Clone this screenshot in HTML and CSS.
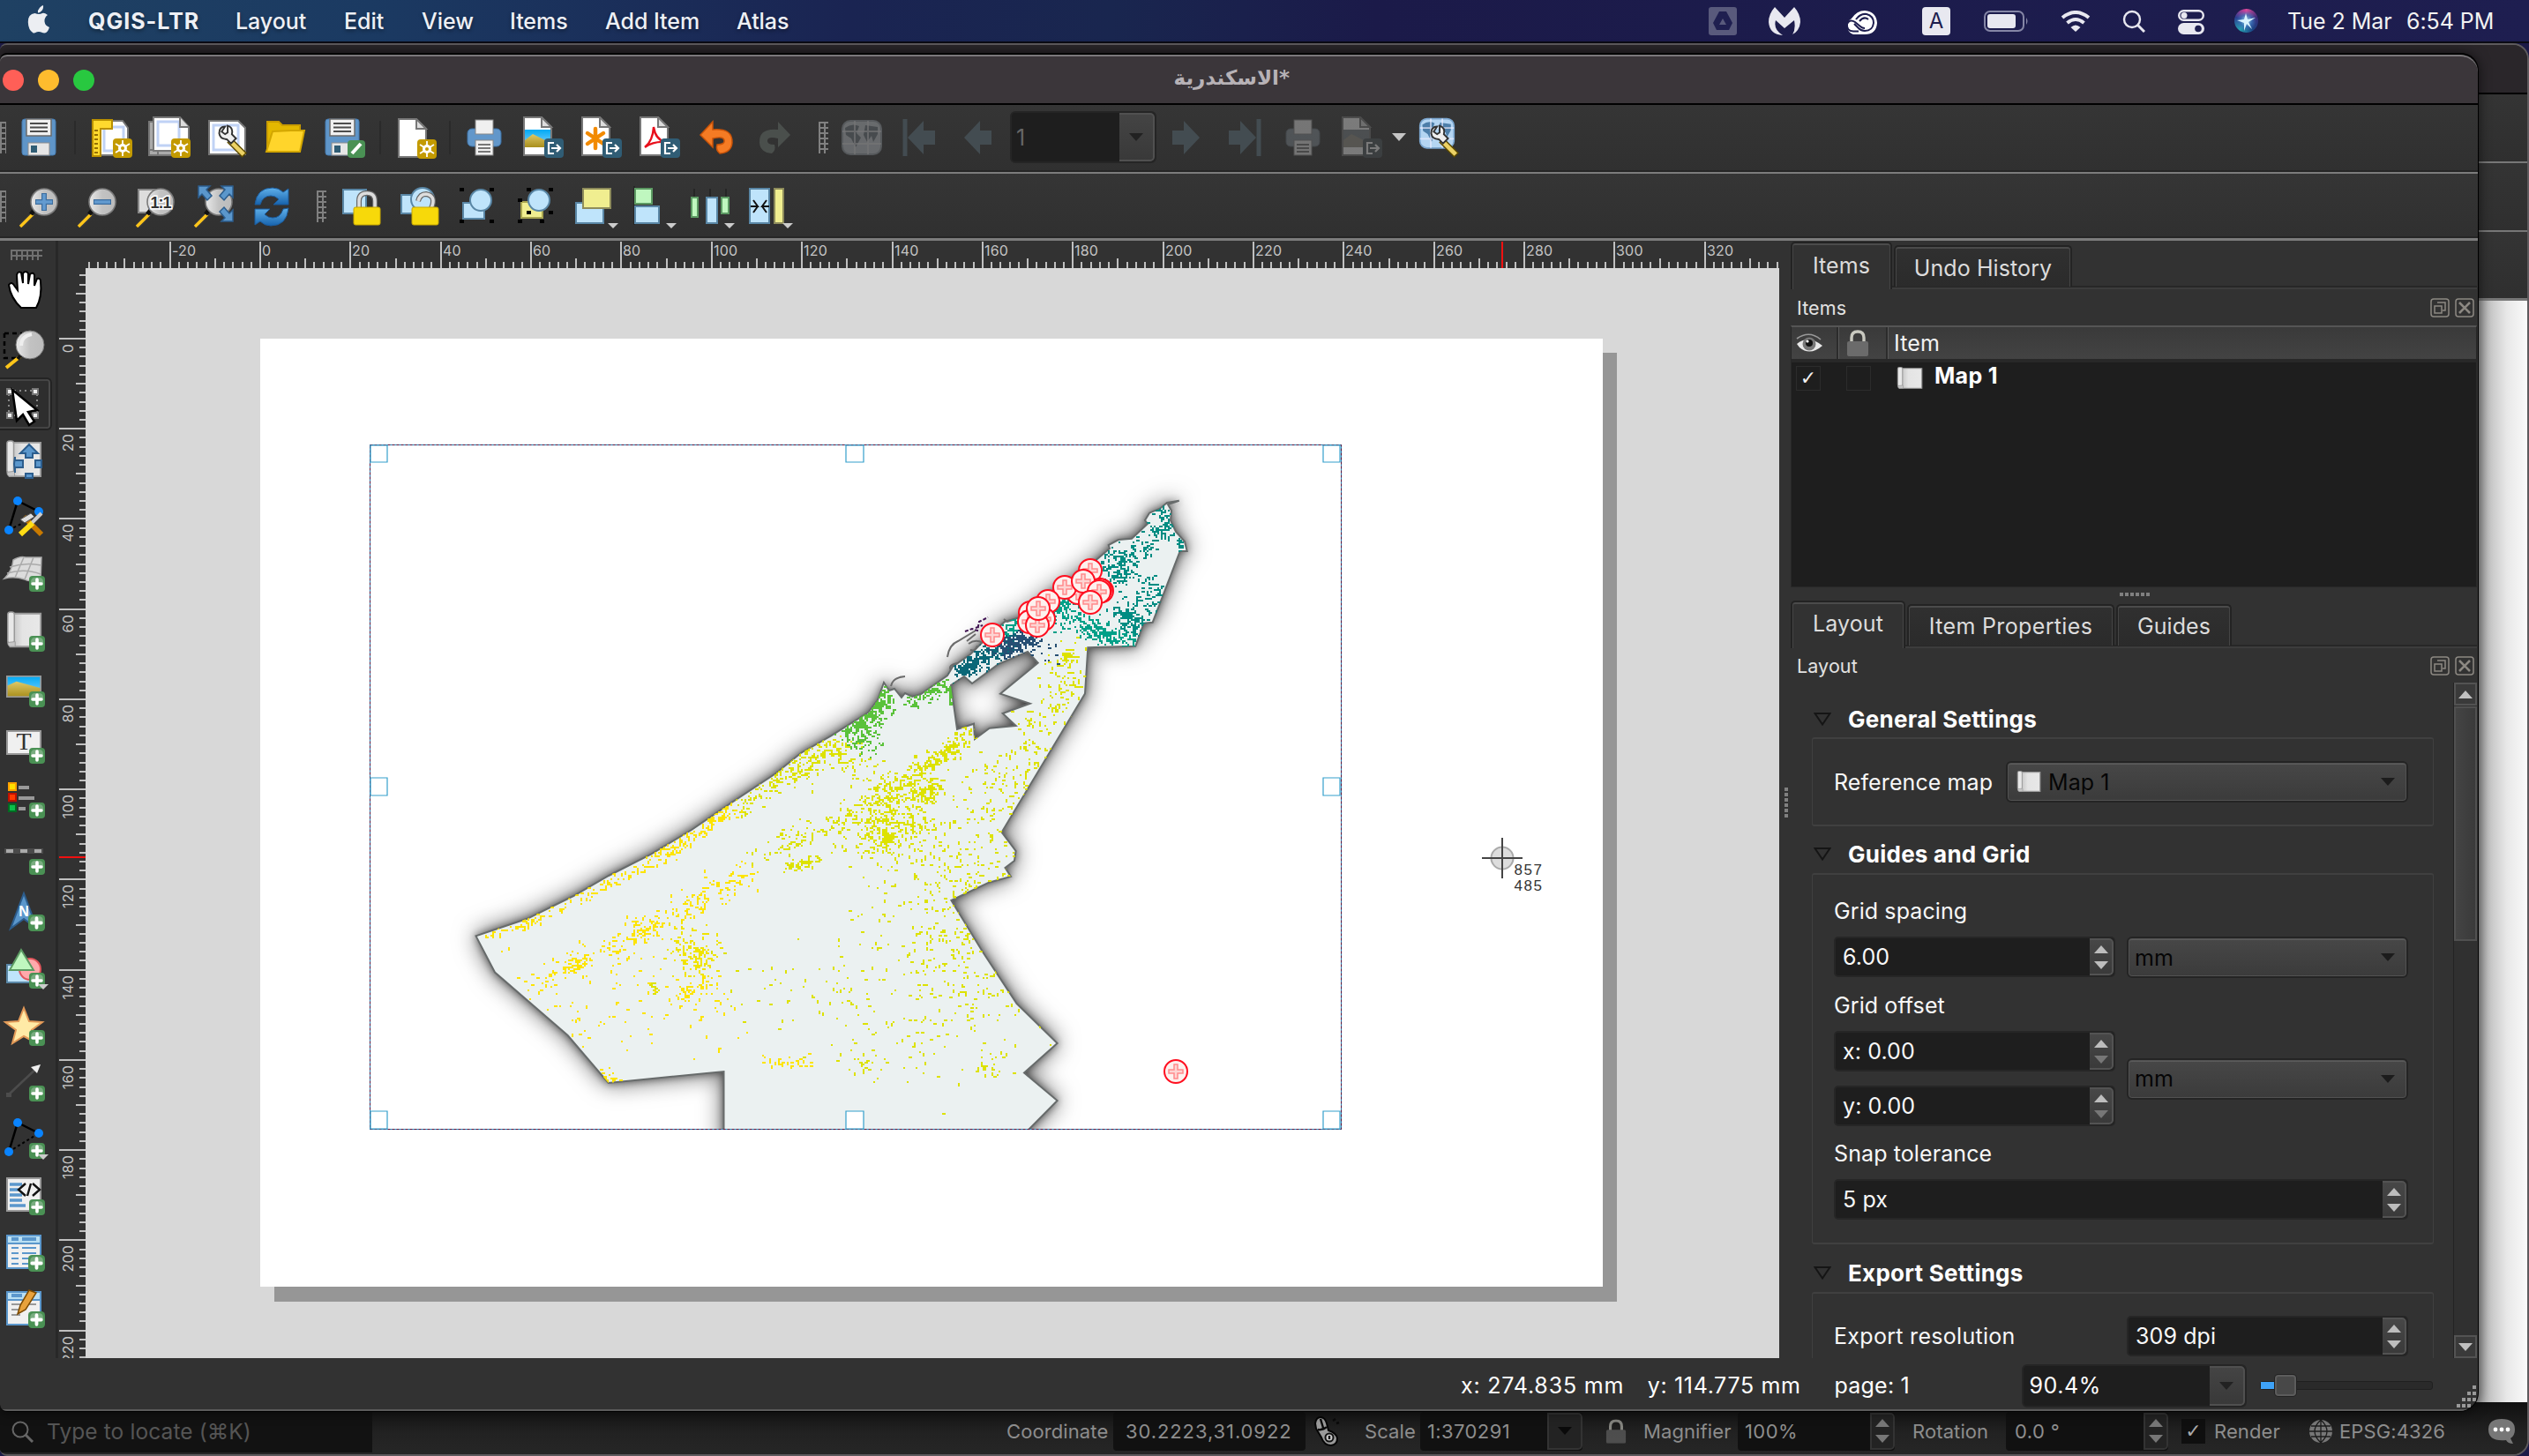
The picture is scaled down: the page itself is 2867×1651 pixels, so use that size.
FILE: index.html
```html
<!DOCTYPE html>
<html lang="en">
<head>
<meta charset="utf-8">
<title>QGIS-LTR layout</title>
<link rel="stylesheet" href="styles.css">
</head>
<body>
<svg class="defs" width="0" height="0">
  <defs>
    <linearGradient id="g-lens" x1="0" y1="0" x2="1" y2="0"><stop offset="0" stop-color="#e9e9e9"/><stop offset=".5" stop-color="#c2c2c2"/><stop offset="1" stop-color="#bcbcbc"/></linearGradient>
    <linearGradient id="g-sky" x1="0" y1="0" x2="0" y2="1"><stop offset="0" stop-color="#00aaf5"/><stop offset="1" stop-color="#8fd3fa"/></linearGradient>
    <linearGradient id="g-sand" x1="0" y1="0" x2="0" y2="1"><stop offset="0" stop-color="#ddc868"/><stop offset="1" stop-color="#a98f1c"/></linearGradient>
    <linearGradient id="g-roll" x1="0" y1="0" x2="1" y2="0"><stop offset="0" stop-color="#bdbdbd"/><stop offset=".4" stop-color="#e4e4e4"/><stop offset="1" stop-color="#e8e8e8"/></linearGradient>
    <linearGradient id="g-blue" x1="0" y1="0" x2="0" y2="1"><stop offset="0" stop-color="#5fb0ea"/><stop offset="1" stop-color="#1763ad"/></linearGradient>
    <symbol id="b-add" viewBox="0 0 18 18"><rect width="18" height="18" rx="4" fill="#4a9154"/><path d="M2 7q0-5 5-5h4q5 0 5 5v1H2z" fill="#79ad80"/><path d="M9 4v10M4 9h10" stroke="#fff" stroke-width="3.600" stroke-linecap="round"/></symbol>
    <symbol id="b-new" viewBox="0 0 22 22"><rect width="22" height="22" rx="4" fill="#c39a00"/><circle cx="11" cy="11" r="5" fill="#fff"/><path d="M11 2v18M3 6l16 10M3 16L19 6" stroke="#fff" stroke-width="1.800"/><circle cx="11" cy="11" r="2" fill="#c39a00"/></symbol>
    <symbol id="b-exp" viewBox="0 0 22 22"><rect width="22" height="22" rx="4" fill="#305d75"/><path d="M11 5H5v12h6M8 11h10M14 7l4 4-4 4" fill="none" stroke="#fff" stroke-width="2.200"/></symbol>
    <symbol id="floppy" viewBox="0 0 48 48"><rect x="5" y="3" width="38" height="41" rx="3" fill="#5f95c8" stroke="#457bb0"/><rect x="10" y="3" width="28" height="19" fill="#f0f0f0" stroke="#6b6b6b" stroke-width="1.500"/><path d="M14 8h20M14 12.500h20M14 17h20" stroke="#4d4d4d" stroke-width="2"/><rect x="12" y="30" width="24" height="14" fill="#e6e6e6" stroke="#8d8d8d"/><rect x="15" y="33" width="7" height="8" fill="#305d75"/></symbol>
    <symbol id="page" viewBox="0 0 48 48"><path d="M9 1h20l11 11v32H9z" fill="#fff" stroke="#777" stroke-width="2"/><path d="M29 1v11h11z" fill="#ddd" stroke="#777" stroke-width="2"/></symbol>
    <symbol id="picture" viewBox="0 0 48 30"><rect x="1" y="1" width="46" height="28" fill="url(#g-sky)"/><path d="M1 14l13-6 33 9v12H1z" fill="url(#g-sand)"/><rect x="1" y="1" width="46" height="28" fill="none" stroke="#999" stroke-width="2"/></symbol>
    <symbol id="scroll" viewBox="0 0 44 46"><path d="M9 3h33v40H5z" fill="url(#g-roll)" stroke="#999" stroke-width="2"/><rect x="2" y="1" width="8" height="38" rx="3" fill="#e8e8e8" stroke="#999" stroke-width="1.600"/><path d="M2 38q0 6 5 5h4v-6z" fill="#c8c8c8" stroke="#999"/></symbol>
    <symbol id="printer" viewBox="0 0 48 48"><rect x="5" y="14" width="38" height="20" rx="5" fill="#6297ca" stroke="#3d73a8"/><rect x="14" y="4" width="20" height="16" fill="#f0f0f0" stroke="#888"/><rect x="14" y="27" width="20" height="17" fill="#f0f0f0" stroke="#888"/><path d="M17 32h14M17 36h14M17 40h14" stroke="#777" stroke-width="1.800"/></symbol>
    <symbol id="glass" viewBox="0 0 48 48"><path d="M19 31L4 46" stroke="#3a3a3a" stroke-width="6"/><path d="M17 33L3 47" stroke="#ffc61a" stroke-width="3.400"/><path d="M19 28l-4 5" stroke="#111" stroke-width="5"/><circle cx="30" cy="19" r="15" fill="url(#g-lens)" stroke="#7a7a7a" stroke-width="1.600"/></symbol>
    <symbol id="wrench" viewBox="0 0 48 48"><path d="M25 27L43 45" stroke="#5d4b00" stroke-width="8"/><path d="M26 28L42 44" stroke="#ecd265" stroke-width="5"/><path d="M20 11q-7 0-7 8 1 7 9 7l5 5 6-6-5-5q2-8-5-10v8l-3 2-4-3z" fill="#eee" stroke="#333" stroke-width="2"/></symbol>
    <symbol id="arrow" viewBox="0 0 48 48"><path d="M8 24L26 5v11h13v16H26v11z" fill="#434c51"/></symbol>
    <symbol id="globe" viewBox="0 0 48 48"><rect x="2" y="4" width="44" height="38" rx="9" fill="#b4d5f2" stroke="#7ba6cf" stroke-width="2"/><path d="M5 12q8-6 16-2l-3 8 5 5-6 11-5-10-6-4zM28 9l14 2v8l-5 9-2-7-5 7-4-8z" fill="#4d7ea9"/><path d="M2 16h44M2 30h44M16 4v38M31 4v38" stroke="#eef" stroke-width="2" opacity=".7"/></symbol>
    <symbol id="eye" viewBox="0 0 32 24"><path d="M1 13Q14 2 30 15 16 27 4 17z" fill="#e8e8e8"/><circle cx="15" cy="13" r="7.500" fill="#777"/><circle cx="15" cy="12" r="4" fill="#111"/><circle cx="13" cy="10" r="1.600" fill="#fff"/><path d="M1 7Q15-3 28 8" fill="none" stroke="#999" stroke-width="1.600"/></symbol>
    <symbol id="padlock" viewBox="0 0 26 30"><path d="M6 15V9q0-7 7-7t7 7v6" fill="none" stroke="#c9c9c0" stroke-width="3.400"/><rect x="1" y="13" width="24" height="17" rx="2" fill="#6b6b6b"/></symbol>
    <symbol id="dockfloat" viewBox="0 0 22 22"><rect x="1" y="1" width="20" height="20" rx="3" fill="none" stroke="#8d8983" stroke-width="1.500"/><path d="M8 5h9v9h-3M5 9h8v8H5z" fill="none" stroke="#8d8983" stroke-width="1.500"/></symbol>
    <symbol id="dockclose" viewBox="0 0 22 22"><rect x="1" y="1" width="20" height="20" rx="3" fill="none" stroke="#8d8983" stroke-width="1.500"/><path d="M5 5l12 12M17 5L5 17" stroke="#8d8983" stroke-width="2.600"/></symbol>
    <symbol id="marker" viewBox="-15 -15 30 30"><circle r="13" fill="#fdf1ee" stroke="#ff0f20" stroke-width="2"/><path d="M-2-8h4v6h6v4h-6v6h-4v-6h-6v-4h6z" fill="#fdd5d3" stroke="#ff8a8c" stroke-width="1.500"/></symbol>
  </defs>
</svg>

<header class="menubar">
  <svg class="apple" viewBox="0 0 26 32"><path d="M18 0q.5 4-2 6.500T12 8.500q-.500-3 2-5.700T18 0zM13 10q2 0 4-1t6 2q-4 3-3.500 7.500T25 25q-2 6-5.500 6.500-2 0-3.200-.7T13 30t-3.300.8-3 .7Q1 28 .8 19T8.500 9Q11 10 13 10z" fill="#eceef2"/></svg>
  <nav class="menus">
    <span class="menu app">QGIS-LTR</span><span class="menu m-layout">Layout</span><span class="menu m-edit">Edit</span><span class="menu m-view">View</span><span class="menu m-items">Items</span><span class="menu m-add">Add Item</span><span class="menu">Atlas</span>
  </nav>
  <div class="extras">
    <svg width="32" height="32" viewBox="0 0 32 32"><rect width="32" height="32" rx="3" fill="#595a7c"/><path d="M12 5h8l7 13-4 8H9l-4-8zM16 13l-4 7h8z" fill="#1f1f50" fill-rule="evenodd"/></svg>
    <svg class="x2" width="36" height="32" viewBox="0 0 36 32"><path d="M7 0l11 12L29 0q7 8 7 17-1 10-9 14 4-6 2-16l-11 9L8 15q-3 10 8 17Q1 31 0 17 0 8 7 0z" fill="#e8e8f0"/></svg>
    <svg class="x3" width="38" height="28" viewBox="0 0 38 28"><path d="M11 27A10 10 0 0 1 9 9Q15 0 24 0q13 1 14 14-1 13-14 13z" fill="#fff"/><path d="M24 20q-3 0-5-2l-6-5q-6-4-9 2-1 8 7 8.500h6M14 10q5-7 12-6 8 2 8 10-1 9-10 9-4 0-7-3l-5-5M18 12q5-6 10-2" fill="none" stroke="#1d1d4e" stroke-width="2"/></svg>
    <span class="input-src">A</span>
    <svg class="x5" width="52" height="24" viewBox="0 0 52 24"><rect x="1" y="1" width="44" height="22" rx="6" fill="none" stroke="#8586a6" stroke-width="2"/><rect x="4" y="4" width="32" height="16" rx="3" fill="#e8e8f0"/><path d="M48 8q3 4 0 8z" fill="#8586a6"/></svg>
    <svg class="x6" width="34" height="24" viewBox="0 0 34 24"><path d="M2 8q15-12 30 0M7.500 14q9.500-8 19 0" fill="none" stroke="#e8e8f0" stroke-width="4"/><path d="M11.500 19q5.500-5 11 0L17 24z" fill="#e8e8f0"/></svg>
    <svg class="x7" width="26" height="26" viewBox="0 0 26 26"><circle cx="11" cy="11" r="9" fill="none" stroke="#e8e8f0" stroke-width="2.400"/><path d="M17 17l8 8" stroke="#e8e8f0" stroke-width="3"/></svg>
    <svg class="x8" width="30" height="28" viewBox="0 0 30 28"><rect x="1.200" y="1.200" width="27.600" height="10.600" rx="5.300" fill="none" stroke="#e8e8f0" stroke-width="2.400"/><circle cx="7" cy="6.500" r="3.500" fill="#e8e8f0"/><rect y="15" width="30" height="13" rx="6.500" fill="#e8e8f0"/><circle cx="23" cy="21.500" r="3.800" fill="#1f1f50"/></svg>
    <span class="siri"><svg width="27" height="27" viewBox="0 0 27 27"><path d="M13 5l2 7 9-2-8 5 4 8-6-6-3 8 0-9-8-3 8-1z" fill="#d8f4ff"/></svg></span>
    <span class="date">Tue 2 Mar</span><span class="time">6:54 PM</span>
  </div>
</header>

<section class="backwin">
  <div class="bw-title"></div><div class="bw-bar b1"></div><div class="bw-bar b2"></div><div class="bw-bar b3"></div>
  <div class="bw-map"></div>
  <footer class="bw-status">
    <div class="locator"><svg width="26" height="26" viewBox="0 0 26 26"><circle cx="10" cy="11" r="8.500" fill="none" stroke="#666" stroke-width="2"/><path d="M16 17l8 8" stroke="#666" stroke-width="3"/></svg><span>Type to locate (⌘K)</span></div>
    <span class="s-coord">Coordinate</span><div class="darkbox w-coord">30.2223,31.0922</div>
    <svg class="mouse" width="30" height="34" viewBox="0 0 30 34"><path d="M2 8Q3 1 8 1t7 7l2 8q9 3 10 9 0 7-7 8-8 0-11-9L3 14z" fill="#9a9a9a" stroke="#050505" stroke-width="2"/><path d="M8 3l3 10M5 15q6 1 10-3M22 5l3-2M26 8l3-1" stroke="#0a0a0a" stroke-width="2.400"/><circle cx="18" cy="24" r="4.500" fill="#ccc" stroke="#111" stroke-width="2"/><path d="M18 22v4" stroke="#111" stroke-width="2.400"/></svg>
    <span class="s-scale">Scale</span><div class="darkbox w-scale">1:370291<i class="dd"></i></div>
    <svg class="s-lock" width="24" height="30" viewBox="0 0 26 30"><use href="#padlock"/></svg>
    <span class="s-mag">Magnifier</span><div class="darkbox w-mag">100%<i class="ud"></i></div>
    <span class="s-rot">Rotation</span><div class="darkbox w-rot">0.0 °<i class="ud"></i></div>
    <span class="check">✓</span><span class="s-render">Render</span>
    <svg class="s-globe" width="30" height="28" viewBox="0 0 30 28"><circle cx="15" cy="14" r="13" fill="#777"/><path d="M2 14h26M4 8h22M4 20h22M15 1v26M15 1q-14 13 0 26M15 1q14 13 0 26" fill="none" stroke="#1c1c1c" stroke-width="1.300"/></svg>
    <span class="s-epsg">EPSG:4326</span>
    <svg class="s-bubble" width="32" height="30" viewBox="0 0 32 30"><path d="M16 1q15 0 15 12 0 7-5 10l3 6q-6 0-8-4-20 2-20-12Q1 1 16 1z" fill="#777"/><circle cx="9" cy="13" r="2.400" fill="#fff"/><circle cx="16" cy="13" r="2.400" fill="#fff"/><circle cx="23" cy="13" r="2.400" fill="#fff"/></svg>
  </footer>
</section>

<main class="window">
  <div class="titlebar"><span class="lights"><i class="red"></i><i class="amber"></i><i class="green"></i></span><h1 dir="rtl">*الاسكندرية</h1></div>

  <div class="toolbar t1">
    <i class="grip half"></i>
    <span class="tb"><svg viewBox="0 0 48 48"><use href="#floppy"/></svg></span><i class="sep"></i>
    <span class="tb"><svg viewBox="0 0 48 48"><path d="M9 5h28l6 8v31H9z" fill="#fff" stroke="#777" stroke-width="2"/><path d="M16 12h22v27H16z" fill="none" stroke="#c0d2f5" stroke-width="3"/><path d="M3 4h22v10H12v31H3z" fill="#ffd92e" stroke="#b98f00" stroke-width="2"/><path d="M5 16h4M5 21h4M5 26h4M5 31h4M5 36h4M5 41h4" stroke="#946f00" stroke-width="2"/><use href="#b-new" x="26" y="25" width="22" height="22"/></svg></span>
    <span class="tb"><svg viewBox="0 0 48 48"><path d="M1 6h10v38H1zM1 38h30v6H1z" fill="#aaa" stroke="#777" stroke-width="2"/><path d="M6 1h30l10 11v27H6z" fill="#fff" stroke="#777" stroke-width="2"/><path d="M11 6h24v27H11z" fill="none" stroke="#c0d2f5" stroke-width="3"/><path d="M36 1v11h10" fill="#ddd" stroke="#777" stroke-width="2"/><use href="#b-new" x="26" y="25" width="22" height="22"/></svg></span>
    <span class="tb"><svg viewBox="0 0 48 48"><path d="M3 5h33l8 8v30H3z" fill="#fff" stroke="#777" stroke-width="2"/><path d="M8 10h28v28H8z" fill="none" stroke="#c0d2f5" stroke-width="3"/><use href="#wrench" x="2" y="1" width="46" height="46"/></svg></span>
    <span class="tb"><svg viewBox="0 0 48 48"><path d="M3 6h13l4 4h20v10H8L3 40z" fill="#e3b800" stroke="#c99c00" stroke-width="2"/><path d="M9 17l21-1h15l-5 24H2z" fill="#ffd52b" stroke="#d3a700" stroke-width="2"/></svg></span>
    <span class="tb"><svg viewBox="0 0 48 48"><use href="#floppy" x="-2"/><rect x="28" y="27" width="20" height="20" rx="4" fill="#4a9154"/><path d="M33 42l10-11" stroke="#fff" stroke-width="4"/></svg></span><i class="sep s2"></i>
    <span class="tb"><svg viewBox="0 0 48 48"><use href="#page" x="-6" y="2"/><use href="#b-new" x="24" y="26" width="22" height="22"/></svg></span><i class="sep s3"></i>
    <span class="tb"><svg viewBox="0 0 48 48"><use href="#printer"/></svg></span>
    <span class="tb"><svg viewBox="0 0 48 48"><use href="#page" x="-6"/><path d="M4 15h29v20H4z" fill="url(#g-sky)"/><path d="M4 27l9-7 20 10v5H4z" fill="url(#g-sand)"/><use href="#b-exp" x="26" y="25" width="22" height="22"/></svg></span>
    <span class="tb"><svg viewBox="0 0 48 48"><use href="#page" x="-6"/><path d="M18 14v22M9 19l18 12M9 31l18-12" stroke="#f28a00" stroke-width="4.500" stroke-linecap="round"/><use href="#b-exp" x="26" y="25" width="22" height="22"/></svg></span>
    <span class="tb"><svg viewBox="0 0 48 48"><use href="#page" x="-6"/><path d="M8 35Q17 28 18 12q2 14 13 17-13-1-23 6z" fill="none" stroke="#e8101c" stroke-width="2.400"/><use href="#b-exp" x="26" y="25" width="22" height="22"/></svg></span>
    <span class="tb"><svg viewBox="0 0 48 48"><path d="M5 21L19 6v9q23-2 22 15-1 11-14 12-5-4-3-10 9 0 8-5t-13-2v10z" fill="#f47b24" stroke="#c95308" stroke-width="1.500"/></svg></span>
    <span class="tb"><svg viewBox="0 0 48 48"><path d="M41 21L27 6v9Q5 13 6 30q1 11 14 12 5-4 3-10-9 0-8-5t12-2v10z" fill="#4a4f4c"/></svg></span>
    <i class="grip g2"></i>
    <span class="tb"><svg class="dis" viewBox="0 0 48 48"><use href="#globe" y="1"/></svg></span>
    <span class="tb"><svg viewBox="0 0 48 48"><use href="#arrow" x="2"/><path d="M7 3v42" stroke="#434c51" stroke-width="5"/></svg></span>
    <span class="tb"><svg viewBox="0 0 48 48"><use href="#arrow"/></svg></span>
    <div class="pagebox"><span>1</span><i></i></div>
    <span class="tb"><svg viewBox="0 0 48 48"><use href="#arrow" transform="matrix(-1 0 0 1 47 0)"/></svg></span>
    <span class="tb"><svg viewBox="0 0 48 48"><use href="#arrow" transform="matrix(-1 0 0 1 45 0)"/><path d="M40 3v42" stroke="#434c51" stroke-width="5"/></svg></span>
    <span class="tb"><svg class="dis" viewBox="0 0 48 48"><use href="#printer"/></svg></span>
    <span class="tb"><svg class="dis" viewBox="0 0 48 48"><use href="#page" x="-6"/><path d="M4 15h29v20H4z" fill="#5b8ba5"/><path d="M4 27l9-7 20 10v5H4z" fill="#a99660"/><use href="#b-exp" x="26" y="25" width="22" height="22"/></svg></span>
    <i class="caret"></i>
    <span class="tb"><svg viewBox="0 0 48 48"><use href="#globe" width="42" height="42" y="-1"/><use href="#wrench" x="2" y="1" width="46" height="46"/></svg></span>
  </div>

  <div class="toolbar t2">
    <i class="grip half"></i>
    <span class="tb"><svg viewBox="0 0 48 48"><use href="#glass"/><path d="M30 9v20M20 19h20" stroke="#3d6e9f" stroke-width="6"/><path d="M30 10v18M21 19h18" stroke="#639bd0" stroke-width="3.500"/></svg></span>
    <span class="tb"><svg viewBox="0 0 48 48"><use href="#glass"/><path d="M20 19h20" stroke="#3d6e9f" stroke-width="6"/><path d="M21 19h18" stroke="#639bd0" stroke-width="3.500"/></svg></span>
    <span class="tb"><svg viewBox="0 0 48 48"><path d="M5 5h22v26H5z" fill="#ddd" stroke="#888" stroke-width="2"/><use href="#glass"/><text x="30" y="26" class="one">1:1</text></svg></span>
    <span class="tb"><svg viewBox="0 0 48 48"><use href="#glass"/><path d="M7 1h13l-4 4 6 7-5 5-6-7-4 4zM46 1H33l4 4-6 7 5 5 6-7 4 4zM46 41H33l4-4-6-7 5-5 6 7 4-4z" fill="#5b97cc" stroke="#2c5d8d" stroke-width="1.500"/></svg></span>
    <span class="tb"><svg viewBox="0 0 48 48"><path d="M5 22Q7 3 25 3q7 0 12 5l6-4v18H26l6-6q-4-4-9-4-9 0-12 10z" fill="url(#g-blue)" stroke="#1b5b9c"/><path d="M43 26Q41 46 23 46q-7 0-12-5l-6 4V27h17l-6 6q4 4 9 4 9 0 12-10z" fill="url(#g-blue)" stroke="#1b5b9c"/></svg></span>
    <i class="grip g3"></i>
    <span class="tb"><svg viewBox="0 0 48 48"><rect x="4" y="5" width="26" height="27" class="lb"/><path d="M22 26V18q0-9 9-9t9 9v8" fill="none" stroke="#666" stroke-width="6"/><path d="M22 26V18q0-9 9-9t9 9v8" fill="none" stroke="#ddd" stroke-width="3.600"/><rect x="16" y="25" width="30" height="20" rx="2" fill="#f7d90a" stroke="#c8a800"/></svg></span>
    <span class="tb"><svg viewBox="0 0 48 48"><rect x="4" y="11" width="26" height="21" class="lb"/><circle cx="28" cy="16" r="13" class="lb"/><path d="M38 26q6-14-6-16-7 0-9 8" fill="none" stroke="#666" stroke-width="6"/><path d="M38 26q6-14-6-16-7 0-9 8" fill="none" stroke="#ddd" stroke-width="3.600"/><rect x="16" y="25" width="30" height="20" rx="2" fill="#f7d90a" stroke="#c8a800"/></svg></span>
    <span class="tb"><svg viewBox="0 0 48 48"><rect x="8" y="20" width="24" height="18" class="lb"/><circle cx="28" cy="17" r="12" class="lb"/><path d="M4 3h5v4H4zM38 3h5v4h-5zM4 39h5v4H4zM38 39h5v4h-5z" fill="#000"/></svg></span>
    <span class="tb"><svg viewBox="0 0 48 48"><rect x="8" y="19" width="24" height="18" fill="#f0ee90" stroke="#a9a650" stroke-width="2"/><circle cx="28" cy="17" r="12" class="lb"/><path d="M14 3h5v4h-5zM39 3h5v4h-5zM4 15h5v4H4zM39 29h5v4h-5zM14 29h5v4h-5zM4 39h5v4H4zM29 39h5v4h-5z" fill="#000"/></svg></span>
    <span class="tb"><svg viewBox="0 0 48 48"><rect x="4" y="20" width="31" height="23" class="lb"/><rect x="12" y="4" width="31" height="22" fill="#f0ee90" stroke="#8e8c5b" stroke-width="2"/><path d="M40 43h12l-6 6z" fill="#ccc"/></svg></span>
    <span class="tb"><svg viewBox="0 0 48 48"><path d="M4 1v44" stroke="#222" stroke-width="1.500"/><rect x="5" y="4" width="19" height="17" fill="#bff7bf" stroke="#5c9a63" stroke-width="2"/><rect x="5" y="24" width="27" height="19" class="lb"/><path d="M40 43h12l-6 6z" fill="#ccc"/></svg></span>
    <span class="tb"><svg viewBox="0 0 48 48"><path d="M6 4v12M24 4v12M42 4v12" stroke="#222" stroke-width="1.500"/><rect x="3" y="14" width="7" height="22" fill="#bff7bf" stroke="#5c9a63" stroke-width="2"/><rect x="20" y="14" width="12" height="29" class="lb"/><rect x="37" y="14" width="8" height="18" fill="#bff7bf" stroke="#5c9a63" stroke-width="2"/><path d="M40 43h12l-6 6z" fill="#ccc"/></svg></span>
    <span class="tb"><svg viewBox="0 0 48 48"><rect x="3" y="4" width="22" height="39" class="lb"/><rect x="31" y="4" width="10" height="39" fill="#f0ee90" stroke="#8e8c5b" stroke-width="2"/><path d="M4 24h8l-5-7m5 7l-5 7M25 24h-8l5-7m-5 7l5 7" fill="none" stroke="#111" stroke-width="2"/><path d="M40 43h12l-6 6z" fill="#ccc"/></svg></span>
  </div>

  <div class="work">
    <aside class="toolbox">
      <i class="hgrip"></i>
      <span><svg viewBox="0 0 48 48"><path d="M18 43Q6 32 4 17q3-5 7 2l3 4-1-17q1-5 5-3l2 12V4q3-4 6 0v12l2-11q4-3 5 1v12l3-8q4-1 4 3 2 18-5 30z" transform="translate(3)" fill="#fff" stroke="#000" stroke-width="2"/></svg></span>
      <span><svg viewBox="0 0 48 48"><path d="M2 8h20M2 8v28h16" fill="none" stroke="#000" stroke-width="2.500" stroke-dasharray="5 4"/><path d="M20 34L4 47" stroke="#ffc61a" stroke-width="4"/><path d="M21 32l-4 5" stroke="#111" stroke-width="4"/><circle cx="31" cy="21" r="16" fill="url(#g-lens)" stroke="#777"/><path d="M21 22q0-11 12-13" fill="none" stroke="#eee" stroke-width="4"/></svg></span>
      <span class="on"><svg viewBox="0 0 48 48"><path d="M7 9h32v28H7z" fill="none" stroke="#888" stroke-width="2" stroke-dasharray="2 4"/><path d="M5 7h6v6H5zM34 7h6v6h-6zM5 34h6v6H5zM34 34h6v6h-6z" fill="#eee" stroke="#777" stroke-width="2"/><path d="M11 8l28 23-10 2 7 11-6 4-7-12-7 7z" fill="#fff" stroke="#000" stroke-width="2.500"/></svg></span>
      <span><svg viewBox="0 0 48 48"><use href="#scroll" x="3" y="1" width="42" height="44"/><path d="M30 6l10 10h-6v5h-8v-5h-6zM14 20v4h9v8h-9v6l-1-10zM44 24h-7v8h7zM26 44v-5h8v5z" fill="#5b97cc" stroke="#2c5d8d" stroke-width="2"/></svg></span>
      <span><svg viewBox="0 0 48 48"><path d="M7 39L17 6l24 12" fill="none" stroke="#000" stroke-width="2.500"/><path d="M7 39l14-7" stroke="#000" stroke-width="2" stroke-dasharray="3 3"/><circle cx="17" cy="6" r="5" fill="#0a84ff"/><circle cx="41" cy="18" r="5" fill="#0a84ff"/><circle cx="7" cy="39" r="5" fill="#0a84ff"/><path d="M24 24l20 20" stroke="#c97a00" stroke-width="6"/><path d="M44 20L32 32" stroke="#ccc" stroke-width="4"/><path d="M34 31L20 44" stroke="#ffdd15" stroke-width="6"/><path d="M20 27l12-7 4 4-11 7z" fill="#ddd" stroke="#555"/></svg></span>
      <span><svg viewBox="0 0 48 48"><path d="M12 9q8-5 14-3h18l-1 26q-14 2-18-1-12-4-23-1 9-9 10-21z" fill="#dcdcdc" stroke="#aaa" stroke-width="1.500"/><path d="M8 17q18-6 36-2M5 24q20-6 38 1M24 6l-10 23M35 6L25 31" fill="none" stroke="#aaa" stroke-width="1.500"/><use href="#b-add" x="30" y="27" width="18" height="18"/></svg></span>
      <span><svg viewBox="0 0 48 48"><use href="#scroll" x="3" y="2" width="43" height="43"/><use href="#b-add" x="30" y="30" width="18" height="18"/></svg></span>
      <span><svg viewBox="0 0 48 48"><use href="#picture" x="4" y="9" width="40" height="29" preserveAspectRatio="none"/><use href="#b-add" x="30" y="29" width="18" height="18"/></svg></span>
      <span><svg viewBox="0 0 48 48"><rect x="5" y="10" width="38" height="26" fill="#f0f0f0" stroke="#999" stroke-width="2"/><text x="24" y="31" class="tee">T</text><use href="#b-add" x="30" y="29" width="18" height="18"/></svg></span>
      <span><svg viewBox="0 0 48 48"><path d="M7 5h8v8H7z" fill="#ffe000" stroke="#ffa200" stroke-width="2"/><path d="M7 17h8v8H7z" fill="#ff3a00" stroke="#c01000" stroke-width="2"/><path d="M7 29h8v8H7z" fill="#0cc04a" stroke="#006c22" stroke-width="2"/><path d="M18 10h12M18 22h18M18 34h8" stroke="#999" stroke-width="4"/><use href="#b-add" x="30" y="27" width="18" height="18"/></svg></span>
      <span><svg viewBox="0 0 48 48"><path d="M2 18h44" stroke="#4a4a4a" stroke-width="6"/><path d="M4 18h8M20 18h8M36 18h8" stroke="#aaa" stroke-width="4"/><use href="#b-add" x="30" y="27" width="18" height="18"/></svg></span>
      <span><svg viewBox="0 0 48 48"><path d="M24 2l15 40-15-11L9 42z" fill="#5b97cc" stroke="#2c5d8d" stroke-width="2"/><text x="24" y="28" class="nn">N</text><use href="#b-add" x="29" y="26" width="19" height="19"/></svg></span>
      <span><svg viewBox="0 0 48 48"><rect x="5" y="19" width="30" height="20" class="lb"/><circle cx="31" cy="24" r="12" fill="#ffa9ac" stroke="#e0565c" stroke-width="2"/><path d="M21 2l14 23H8z" fill="#bff7bf" stroke="#5c9a63" stroke-width="2"/><use href="#b-add" x="30" y="28" width="18" height="18"/><path d="M40 41h12l-6 6z" fill="#ccc"/></svg></span>
      <span><svg viewBox="0 0 48 48"><path d="M24 4l6 15 15 1-12 9 4 14-13-7-13 8 4-15-12-9 15-1z" fill="#ffeaa6" stroke="#e39a58" stroke-width="2"/><use href="#b-add" x="30" y="29" width="18" height="18"/></svg></span>
      <span><svg viewBox="0 0 48 48"><path d="M7 38L42 5" stroke="#4c4c4c" stroke-width="2.500"/><path d="M4 36h6v5H4z" fill="#4c4c4c"/><path d="M43 4l-11 3 7 7z" fill="#eee"/><use href="#b-add" x="30" y="28" width="18" height="18"/></svg></span>
      <span><svg viewBox="0 0 48 48"><path d="M7 39L17 6l24 12" fill="none" stroke="#000" stroke-width="2.500"/><path d="M7 39l34-21" stroke="#000" stroke-width="2" stroke-dasharray="3 3"/><circle cx="17" cy="6" r="5" fill="#0a84ff"/><circle cx="41" cy="18" r="5" fill="#0a84ff"/><circle cx="7" cy="39" r="5" fill="#0a84ff"/><use href="#b-add" x="30" y="29" width="18" height="18"/><path d="M40 42h12l-6 6z" fill="#ccc"/></svg></span>
      <span><svg viewBox="0 0 48 48"><rect x="5" y="5" width="38" height="37" fill="#f0f0f0" stroke="#999" stroke-width="2"/><path d="M8 12h14M8 18h10M8 24h14M8 30h14M8 36h18" stroke="#5b97cc" stroke-width="3.500"/><path d="M26 11l-8 7 8 7M34 11l8 7-8 7M32 11l-4 14" fill="none" stroke="#111" stroke-width="2.400"/><use href="#b-add" x="30" y="29" width="18" height="18"/></svg></span>
      <span><svg viewBox="0 0 48 48"><rect x="5" y="5" width="38" height="37" fill="#f0f0f0" stroke="#5b97cc" stroke-width="2"/><path d="M5 5h38v9H5z" fill="#b9dff3" stroke="#5b97cc" stroke-width="2"/><path d="M10 9h8M22 9h16" stroke="#5b97cc" stroke-width="4"/><path d="M10 19h8M22 19h16M10 25h8M22 25h16M10 31h8M22 31h16M10 37h8M22 37h10" stroke="#5b97cc" stroke-width="2"/><use href="#b-add" x="29" y="27" width="19" height="19"/></svg></span>
      <span><svg viewBox="0 0 48 48"><rect x="5" y="5" width="38" height="37" fill="#f0f0f0" stroke="#5b97cc" stroke-width="2"/><path d="M5 5h38v9H5z" fill="#b9dff3" stroke="#5b97cc" stroke-width="2"/><path d="M10 9h12" stroke="#5b97cc" stroke-width="4"/><path d="M10 19h28M10 25h10M10 31h10" stroke="#999" stroke-width="2"/><path d="M30 3l8 3-12 19-9 5 3-10z" fill="#e8a23c" stroke="#7c4a00" stroke-width="1.500"/><use href="#b-add" x="29" y="27" width="19" height="19"/></svg></span>
    </aside>

    <div class="stage">
      <svg id="hruler" class="hruler" width="1951" height="31" viewBox="66 273 1951 31"></svg>
      <div class="stage-row">
        <svg id="vruler" class="vruler" width="31" height="1236" viewBox="66 304 31 1236"></svg>
        <svg class="canvas" width="1920" height="1236" viewBox="97 304 1920 1236">
          <defs>
            <clipPath id="frame"><rect x="419" y="504" width="1101" height="776"/></clipPath>
            <path id="land" d="M539.500 1061.400L561 1102.500 643.600 1174 689.700 1228 820.500 1215V1300H1150L1167 1280 1198.600 1248 1161 1216.400 1198.600 1183 1152.600 1138 1113.800 1079 1078.400 1021 1121 1000.700 1146 994 1139.500 984 1150 976 1151.600 965 1135.600 943.600 1230 786.400 1233.300 734.300 1287.300 732.700 1296.700 706.700 1306.700 705.700 1337.700 625H1345.700L1343 614 1333 603 1327 590 1328 579 1324 572 1336.700 567.700 1323 570 1315 576.700 1303 581.700 1298 590 1301 594 1283 610.700 1268 612 1256.700 618 1258 622 1245 633 1220 653 1193 670 1156.700 700 1139 705 1115 727 1100 742 1080 756 1074 766 1054 780 1044 787 1034 790 1026 786 1022 791 1014 781 1008 783 1002 774 995 793.600 984 808 941.700 834.600 907.800 854 878.700 877.500 830 909.600 784 941 738 968.600 690 993 650 1016 597.600 1041.800ZM1165 739L1176.700 751.700 1134 786.700 1167.700 797.700 1136.700 809 1151.700 823 1121.700 825.700 1105 838 1104 820.700 1085 827 1078 777 1093 767 1102 775 1132 753Z"/>
            <clipPath id="landclip"><use href="#land"/></clipPath>
          </defs>
          <rect x="311" y="400" width="1522" height="1076" fill="#969696"/>
          <rect x="295" y="384" width="1522" height="1075" fill="#fff"/>
          <g clip-path="url(#frame)">
            <use href="#land" class="land"/>
            <path d="M1074 745q2-14 12-18l20-12M1098 730q8-6 16-1M1100 737q6 2 8-5M1138 702l4 3 6-2M1078 760q-4-6 8-8M1010 778q2-10 16-11M1096 727l10-8" class="coast"/>
            <path d="M1094 716l8-3 6 2 2-10 10-5M1106 712l8-3" class="purple"/>
            <g id="dots" clip-path="url(#landclip)"></g>
          </g>
          <g id="markers"></g>
          <rect x="419.500" y="504.500" width="1101" height="776" class="frame"/><rect x="419.500" y="504.500" width="1101" height="776" class="frame dash"/>
          <g class="handles"><path d="M420 505h19v19h-19zM959 505h20v19h-20zM1500 505h19v19h-19zM420 882h19v20h-19zM1500 882h19v20h-19zM420 1260h19v20h-19zM959 1260h20v20h-20zM1500 1260h19v20h-19z"/></g>
          <g class="cursor"><circle cx="1703" cy="973" r="12.500"/><path d="M1680 973h46M1703 950v46"/><text x="1716.500" y="992">857</text><text x="1716.500" y="1010">485</text></g>
        </svg>
      </div>
    </div>

    <aside class="panel">
      <i class="vgrip"></i>
      <div class="docks">
        <div class="tabs"><span class="tab cur w1">Items</span><span class="tab w2">Undo History</span></div>
        <div class="dock-title"><span>Items</span><svg width="22" height="22"><use href="#dockfloat"/></svg><svg width="22" height="22"><use href="#dockclose"/></svg></div>
        <div class="list-head"><span class="c1"><svg width="32" height="24"><use href="#eye"/></svg></span><span class="c2"><svg width="26" height="30"><use href="#padlock"/></svg></span><span class="c3">Item</span></div>
        <div class="list"><div class="list-row"><span class="box">✓</span><span class="box empty"></span><svg class="mapicon" width="30" height="26" viewBox="0 0 44 46" preserveAspectRatio="none"><use href="#scroll"/></svg><b>Map 1</b></div></div>
        <div class="split"><i></i></div>
        <div class="tabs low"><span class="tab cur w3">Layout</span><span class="tab w4">Item Properties</span><span class="tab w5">Guides</span></div>
        <div class="dock-title low"><span>Layout</span><svg width="22" height="22"><use href="#dockfloat"/></svg><svg width="22" height="22"><use href="#dockclose"/></svg></div>
        <div class="scroller">
          <div class="form">
            <h2 class="h-a"><svg width="20" height="15" viewBox="0 0 20 15"><path d="M1.500 1h17L10 13.500z"/></svg>General Settings</h2>
            <div class="group ga"><label>Reference map</label><div class="combo refmap"><svg width="28" height="25" viewBox="0 0 44 46" preserveAspectRatio="none"><use href="#scroll"/></svg>Map 1</div></div>
            <h2 class="h-b"><svg width="20" height="15" viewBox="0 0 20 15"><path d="M1.500 1h17L10 13.500z"/></svg>Guides and Grid</h2>
            <div class="group gb">
              <label>Grid spacing</label>
              <div class="pair"><div class="spin">6.00<i></i></div><div class="combo">mm</div></div>
              <label>Grid offset</label>
              <div class="pair mid"><div class="stack"><div class="spin low">x: 0.00<i></i></div><div class="spin low">y: 0.00<i></i></div></div><div class="combo">mm</div></div>
              <label>Snap tolerance</label>
              <div class="spin">5 px<i></i></div>
            </div>
            <h2 class="h-c"><svg width="20" height="15" viewBox="0 0 20 15"><path d="M1.500 1h17L10 13.500z"/></svg>Export Settings</h2>
            <div class="group gc"><label>Export resolution</label><div class="spin res">309 dpi<i></i></div></div>
          </div>
          <div class="sbar"><i class="up"></i><i class="thumb"></i><i class="down"></i></div>
        </div>
      </div>
    </aside>
  </div>

  <footer class="status">
    <span class="p-x">x: 274.835 mm</span><span class="p-y">y: 114.775 mm</span><span class="p-p">page: 1</span>
    <div class="zoombox"><span>90.4%</span><i></i></div>
    <div class="slider"><i class="fill"></i><i class="knob"></i></div>
    <svg class="sizegrip" width="24" height="30" viewBox="0 0 24 30"><path d="M18 3h4v4h-4zM12 10h4v4h-4zM18 10h4v4h-4zM6 17h4v4H6zM12 17h4v4h-4zM18 17h4v4h-4zM0 24h4v4H0zM6 24h4v4H6zM12 24h4v4h-4z" fill="#999"/></svg>
  </footer>
</main>
<script src="script.js"></script>
</body>
</html>
```
FILE: styles.css
```css
* { box-sizing: border-box; }
body { margin: 0; width: 2867px; height: 1651px; overflow: hidden; background: #1c1a47; font-family: Inter, "Noto Sans", sans-serif; font-size: 25px; color: #f2f2f2; position: relative; white-space: nowrap; }
.defs { position: absolute; }
h1, h2 { margin: 0; font-weight: 600; }
i { display: block; flex: none; font-style: normal; }
svg { flex: none; display: block; }

/* menu bar */
.menubar { height: 49px; display: flex; align-items: center; background: linear-gradient(90deg, #1f4163 0, #1b3a62 420px, #1a2452 960px, #19264f 1260px, #1b1a49 1560px, #1e1e50 100%); border-bottom: 2px solid #0b0b14; }
.apple { width: 26px; height: 32px; margin-left: 31px; margin-top: -3px; }
.menus { display: flex; margin-left: 43px; flex: 1; text-shadow: 0 2px 4px #0006; }
.menu { color: #eef0f5; font-weight: 500; letter-spacing: -.05px; }
.app { width: 167px; font-weight: 700; letter-spacing: 1px; }
.m-layout { width: 123px; } .m-edit { width: 88px; } .m-view { width: 100px; } .m-items { width: 108px; } .m-add { width: 149px; }
.extras { display: flex; align-items: center; width: 930px; flex: none; }
.x2 { margin-left: 36px; } .x3 { margin: 4px 0 0 49px; }
.input-src { margin-left: 51px; width: 32px; height: 32px; border-radius: 4px; background: #e8e8f0; color: #1d1d4e; text-align: center; line-height: 32px; font-size: 24px; }
.x5 { margin-left: 38px; } .x6 { margin-left: 35px; } .x7 { margin-left: 36px; } .x8 { margin: 3px 0 0 37px; }
.siri { margin-left: 34px; width: 27px; height: 27px; border-radius: 50%; background: radial-gradient(circle, #9fd8e8 0, #3a70b8cc 35%, transparent 60%), conic-gradient(#d64a9a, #3a2a78, #1b4484, #26a0b0, #2b3e90, #e0409a); }
.date { margin-left: 33px; width: 135px; letter-spacing: -.05px; } .time { letter-spacing: -.05px; }

/* window behind */
.backwin { position: absolute; left: 0; top: 49px; width: 2867px; height: 1602px; background: #323232; border: 2px solid #5d5a5d; border-left: 0; border-radius: 8px 18px 18px 8px; overflow: hidden; display: flex; flex-direction: column; }
.bw-title { height: 56px; flex: none; background: #2a262a; border-bottom: 2px solid #000; }
.bw-bar { background: linear-gradient(#343434, #2f2f2f); border-bottom: 2px solid #777; flex: none; }
.b1 { height: 78px; } .b2 { height: 78px; } .b3 { height: 78px; border-bottom-width: 3px; }
.bw-map { flex: 1; background: linear-gradient(90deg, #fff 2790px, #909090 2806px, #c4c4c4 2822px, #e8e8e8 2842px, #fafafa 2865px); }
.bw-status { height: 59px; flex: none; padding: 6px 0 0; background: linear-gradient(#101010, #222 60%, #262626); display: flex; align-items: center; font-size: 22px; color: #8d8d8d; letter-spacing: .1px; }
.locator { width: 422px; height: 48px; background: #121212; padding-left: 13px; display: flex; align-items: center; gap: 14px; font-size: 24.500px; color: #555; letter-spacing: .1px; }
.s-coord { width: 121px; margin-left: 719px; }
.darkbox { height: 44px; background: #111; border-radius: 4px; display: flex; align-items: center; padding-left: 14px; }
.w-coord { width: 218px; letter-spacing: .9px; } .mouse { margin-left: 9px; }
.s-scale { margin-left: 28px; width: 63px; } .w-scale { width: 184px; padding-left: 8px; letter-spacing: .4px; }
.dd, .ud { margin-left: auto; width: 40px; height: 42px; border: 2px solid #333; border-radius: 0 5px 5px 0; background: #232323; display: flex; align-items: center; justify-content: center; }
.dd::after { content: ""; border: 8px solid transparent; border-top: 9px solid #0a0a0a; border-bottom: 0; }
.ud { width: 28px; flex-direction: column; gap: 9px; }
.ud::before { content: ""; border: 8px solid transparent; border-bottom: 9px solid #777; border-top: 0; }
.ud::after { content: ""; border: 8px solid transparent; border-top: 9px solid #777; border-bottom: 0; }
.s-lock { margin-left: 26px; opacity: .6; } .s-mag { margin-left: 19px; width: 107px; } .w-mag { width: 178px; padding-left: 8px; letter-spacing: .4px; }
.s-rot { margin-left: 20px; width: 106px; } .w-rot { width: 184px; padding-left: 10px; letter-spacing: .4px; }
.check { margin-left: 15px; width: 27px; height: 28px; background: #0f0f0f; text-align: center; line-height: 28px; color: #aaa; font-family: "DejaVu Sans"; }
.s-render { margin-left: 10px; width: 106px; } .s-epsg { margin-left: 6px; width: 168px; }

/* front window */
.window { position: absolute; left: 0; top: 60px; width: 2810px; height: 1541px; background: #323232; border: 1px solid #000; border-width: 2px 1px 1px 0; border-radius: 8px 20px 22px 8px; box-shadow: 0 0 14px #0009; overflow: hidden; display: flex; flex-direction: column; }
.titlebar { height: 57px; flex: none; background: #3b363a; border-top: 2px solid #7b787b; border-bottom: 2px solid #000; border-radius: 8px 20px 0 0; display: flex; align-items: center; }
.lights { display: flex; gap: 16px; margin-left: 3px; width: 1330px; }
.lights i { width: 24px; height: 24px; border-radius: 50%; }
.red { background: #ff5f57; } .amber { background: #febc2e; } .green { background: #28c840; }
h1 { font: bold 23px "DejaVu Sans", sans-serif; color: #b7b2b6; width: 129px; text-align: center; padding-bottom: 6px; }
.toolbar { flex: none; display: flex; align-items: center; background: linear-gradient(#353535, #303030); box-shadow: inset 0 -4px 0 -2px #262626; border-bottom: 2px solid #7c7c7c; }
.t1 { height: 78px; padding-bottom: 3px; } .t2 { height: 76px; border-bottom-width: 3px; }
.tb { width: 66px; flex: none; display: flex; justify-content: center; }
.tb svg { width: 48px; height: 48px; overflow: visible; }
.grip { height: 36px; width: 11px; background: conic-gradient(from 90deg at 2px 2px, transparent 90deg, #808080 0) 0 0 / 6px 6px; }
.half { width: 7px; margin-right: 4px; }
.sep { width: 2px; height: 38px; background: #2a2a2a; margin: 0 7px 0 7px; }
.s2 { margin: 0 8px 0 7px; } .s3 { margin: 0 5px 0 3px; }
.g2 { margin: 0 5px 0 16px; } .g3 { margin: 0 6px 0 18px; }
.dis { opacity: .35; filter: grayscale(.8); }
.pagebox, .zoombox { background: #1e1e1e; border: 2px solid #252525; border-radius: 6px; display: flex; align-items: center; }
.pagebox { width: 166px; height: 59px; margin: 0 1px 0 3px; color: #666; padding-left: 5px; }
.pagebox i, .zoombox i { margin-left: auto; width: 40px; height: 100%; border: 2px solid #505050; border-left: 0; border-radius: 0 5px 5px 0; background: linear-gradient(#444, #393939); display: flex; align-items: center; justify-content: center; }
.pagebox i::after, .zoombox i::after { content: ""; border: 8px solid transparent; border-top: 9px solid #222; border-bottom: 0; }
.caret { border: 8px solid transparent; border-top: 9px solid #c5c5c5; border-bottom: 0; margin: 0 5px 0 2px; }
.lb { fill: #bfe4fb; stroke: #5a87a6; stroke-width: 2; }
.one { font: bold 18px "Liberation Sans"; text-anchor: middle; fill: #333; stroke: #fff; stroke-width: 3; paint-order: stroke; letter-spacing: -1px; }
.tee { font: 28px "Liberation Serif"; text-anchor: middle; fill: #333; }
.nn { font: bold 16px "Liberation Sans"; text-anchor: middle; fill: #fff; }

/* work area */
.work { display: flex; height: 1267px; flex: none; }
.toolbox { width: 66px; border-right: 3px solid #282828; overflow: hidden; }
.hgrip { width: 36px; height: 12px; margin: 10px 0 3px 12px; background: conic-gradient(from 90deg at 2px 2px, transparent 90deg, #707070 0) 0 0 / 6px 6px; }
.toolbox span { display: flex; align-items: center; height: 64.100px; width: 59px; padding-left: 3px; }
.toolbox svg { width: 48px; height: 48px; overflow: visible; }
.toolbox .on { border: 2px solid #232323; border-left: 0; border-radius: 0 6px 6px 0; box-shadow: inset -2px 0 0 #4a4a4a, inset 0 2px 0 #444, inset 0 -2px 0 #444; height: 60px; margin: 2px 0; background: #2e2e2e; }
.stage { width: 1951px; flex: none; }
.stage-row { display: flex; }
.hruler, .vruler { background: #323232; overflow: hidden; }
.hruler text, .vruler text { font: 16px Inter, sans-serif; fill: #c4c4c4; letter-spacing: .2px; }
.vruler text { text-anchor: end; }
.tick { fill: #c0c0c0; } .pos { fill: #f01010; }
.canvas { background: #d8d8d8; }
.land { fill: #ebf1f1; fill-rule: evenodd; stroke: #676b6b; stroke-width: 2; filter: drop-shadow(0 0 4px #0007) drop-shadow(0 0 13px #0009); }
#landclip use { clip-rule: evenodd; }
.coast { fill: none; stroke: #6b6b6b; stroke-width: 2; } .purple { fill: none; stroke: #3e1150; stroke-width: 2; stroke-dasharray: 4 2; }
.frame { fill: none; stroke: #1e90c4; } .dash { stroke: #5a1038; stroke-dasharray: 3 2; }
.handles { fill: #fff; stroke: #35a0cc; stroke-width: 1.200; }
.cursor circle { fill: #ddd; stroke: #aaa; stroke-width: 2; } .cursor path { stroke: #444; stroke-width: 2; }
.cursor text { font: 600 17px "Liberation Sans", sans-serif; fill: #333; stroke: #fff; stroke-width: 2; paint-order: stroke; letter-spacing: 1.500px; font-weight: 400; }

/* docks */
.panel { width: 791px; flex: none; display: flex; align-items: flex-start; }
.vgrip { width: 4px; height: 36px; margin: 620px 3px 0 6px; background: linear-gradient(#808080 4px, transparent 4px) 0 0 / 4px 6px; }
.docks { width: 778px; letter-spacing: .1px; }
.tabs { height: 55px; display: flex; align-items: flex-end; border-bottom: 2px solid #3c3c3c; box-shadow: inset 0 -2px 0 #272727; padding-bottom: 1px; }
.tab { height: 47px; border: 2px solid #232323; border-bottom: 0; border-radius: 5px 5px 0 0; box-shadow: inset 0 2px 0 #4b4b4b, inset 1px 0 0 #454545, inset -1px 0 0 #454545; background: linear-gradient(#303030, #2b2b2b); text-align: center; line-height: 48px; color: #dcdcdc; margin-right: 2px; flex: none; }
.tab.cur { height: 54px; background: #323232; margin-bottom: -3px; line-height: 51px; padding-bottom: 3px; }
.w1 { width: 115px; } .w2 { width: 202px; } .w3 { width: 130px; } .w4 { width: 235px; letter-spacing: .35px; } .w5 { width: 131px; }
.tabs.low { height: 54px; } .low .tab.cur { line-height: 49px; } .low .tab { line-height: 47px; }
.dock-title { height: 41px; display: flex; align-items: center; padding: 1px 4px 0 7px; gap: 6px; font-size: 21.500px; color: #e2e2e2; }
.dock-title span { flex: 1; } .dock-title.low { height: 39px; padding-top: 1px; }
.dock-title svg { position: relative; left: 1px; }
.list-head { height: 41px; border: 1px solid #262626; border-top: 2px solid #555; border-bottom: 3px solid #282828; background: linear-gradient(#3a3a3a, #434343); display: flex; align-items: stretch; }
.list-head span { display: flex; align-items: center; }
.c1 { width: 53px; padding-left: 5px; border-right: 2px solid #2c2c2c; box-shadow: 1px 0 0 #585858; } .c2 { width: 56px; padding-left: 9px; border-right: 2px solid #2c2c2c; box-shadow: 1px 0 0 #585858; } .c3 { padding-left: 7px; }
.list { height: 256px; background: #1e1e1e; border: 1px solid #282828; padding: 4px 5px; }
.list-row { display: flex; align-items: center; height: 28px; } .list-row b { font-weight: 700; margin-left: 13px; margin-top: -6px; color: #fff; letter-spacing: .3px; }
.box { width: 28px; height: 28px; border: 1px solid #2c2c2c; text-align: center; font: 22px/26px "DejaVu Sans"; } .box.empty { margin: 0 29px; }
.split { height: 15px; padding: 6px 0 0 373px; } .split i { width: 36px; height: 4px; background: linear-gradient(90deg, #808080 4px, transparent 4px) 0 0 / 6px 4px; }
.scroller { height: 766px; display: flex; overflow: hidden; }
.form { width: 751px; padding-left: 24px; color: #f8f8f8; }
h2 { display: flex; align-items: center; font-size: 26px; font-weight: 700; padding-left: 2px; gap: 19px; color: #fff; letter-spacing: .25px; }
h2 path { fill: none; stroke: #151515; stroke-width: 2; }
.h-a { height: 62px; padding-top: 20px; } .h-b { height: 53px; padding-top: 9px; } .h-c { height: 54px; padding-top: 10px; }
.group { width: 705px; border: 1px solid #404040; border-width: 2px 1px; border-radius: 3px; padding: 0 28px 0 24px; }
.ga { height: 101px; display: flex; align-items: center; justify-content: space-between; }
.gb { height: 421px; padding-top: 21px; } .gc { height: 120px; padding-top: 25px; display: flex; justify-content: space-between; align-items: flex-start; }
.gb label { display: flex; align-items: center; height: 40px; margin-bottom: 9px; }
.gb > .pair, .gb > .spin { margin-bottom: 11px; }
.gc label { line-height: 46px; letter-spacing: .3px; }
.pair { display: flex; justify-content: space-between; } .pair.mid { align-items: center; }
.pair .spin { width: 319px; } .pair .combo { width: 319px; }
.stack { display: grid; gap: 16px; }
.spin { height: 46px; background: #1e1e1e; border: 2px solid #262626; border-radius: 5px; padding-left: 8px; display: flex; align-items: center; }
.res { width: 319px; }
.spin i { margin-left: auto; width: 27px; height: 100%; border: 2px solid #535353; border-left: 0; border-radius: 0 5px 5px 0; background: linear-gradient(#474747, #3a3a3a); display: flex; flex-direction: column; gap: 9px; align-items: center; justify-content: center; }
.spin i::before { content: ""; border: 8px solid transparent; border-bottom: 9px solid #bdbdbd; border-top: 0; }
.spin i::after { content: ""; border: 8px solid transparent; border-top: 9px solid #bdbdbd; border-bottom: 0; }
.spin.low i::after { border-top-color: #777; }
.combo { height: 47px; border: 2px solid #242424; border-radius: 6px; background: linear-gradient(#474747, #3b3b3b); box-shadow: inset 0 0 0 1px #525252, inset 0 2px 0 #5c5c5c; color: #060606; display: flex; align-items: center; padding: 0 13px 0 7px; }
.combo::after { content: ""; margin-left: auto; border: 8px solid transparent; border-top: 9px solid #1c1c1c; border-bottom: 0; }
.refmap { width: 456px; gap: 8px; padding-left: 10px; }
.sbar { width: 27px; display: flex; flex-direction: column; background: #303030; border-left: 1px solid #232323; }
.up, .down { height: 26px; border: 2px solid #535353; background: #3a3a3a; display: flex; align-items: center; justify-content: center; }
.up::after { content: ""; border: 8px solid transparent; border-bottom: 9px solid #c0c0c0; border-top: 0; }
.down::after { content: ""; border: 8px solid transparent; border-top: 9px solid #c0c0c0; border-bottom: 0; }
.thumb { height: 266px; margin-top: 1px; border: 2px solid #505050; background: linear-gradient(90deg, #444, #3a3a3a); }
.down { margin-top: auto; }

/* status bar */
.status { height: 60px; flex: none; display: flex; align-items: center; color: #fff; padding-top: 4px; border-bottom: 2px solid #5c5c5c; letter-spacing: .5px; }
.p-x { margin-left: 1656px; width: 212px; letter-spacing: .8px; } .p-y { width: 212px; letter-spacing: .65px; } .p-p { width: 213px; letter-spacing: .2px; }
.zoombox { width: 255px; height: 49px; padding-left: 6px; letter-spacing: .6px; }
.slider { width: 196px; height: 10px; margin-left: 15px; background: #2a2a2a; border: 1px solid #202020; border-radius: 3px; display: flex; align-items: center; }
.fill { width: 16px; height: 8px; background: #3ea2f7; } .knob { width: 24px; height: 24px; border: 2px solid #5c5c5c; border-radius: 4px; background: #484848; box-shadow: 0 0 0 1px #222; }
.sizegrip { align-self: flex-end; margin-left: 27px; }
```
FILE: script.js
```js
const NS = 'http://www.w3.org/2000/svg';
function add(parent, tag, attrs, text) {
  const el = document.createElementNS(NS, tag);
  for (const k in attrs) el.setAttribute(k, attrs[k]);
  if (text !== undefined) el.textContent = text;
  parent.appendChild(el);
}

// rulers: a tick every 2 mm, longer at 10 mm, labelled at 20 mm
const PX = 5.118;
const h = document.getElementById('hruler');
const v = document.getElementById('vruler');
for (let mm = -38; mm <= 336; mm += 2) {
  const x = Math.round(295 + mm * PX);
  const major = mm % 20 === 0, mid = mm % 10 === 0;
  const len = major ? 30 : mid ? 11 : 7;
  if (x >= 97) {
    add(h, 'rect', { x: x - 1, y: 304 - len, width: 2, height: len, class: 'tick' });
    if (major) add(h, 'text', { x: x + 2, y: 290 }, mm);
  }
  const y = Math.round(384 + mm * 5.112);
  if (y >= 304 && y < 1540) {
    add(v, 'rect', { x: 97 - len, y: y - 1, width: len, height: 2, class: 'tick' });
    if (major) add(v, 'text', { transform: `translate(83 ${y + 6}) rotate(-90)` }, mm);
  }
}
add(h, 'rect', { x: 1702, y: 274, width: 2, height: 30, class: 'pos' });
add(v, 'rect', { x: 67, y: 971, width: 30, height: 2, class: 'pos' });

// building footprints, scattered around line segments: colour, x1, y1, x2, y2, spread, count
let seed = 7;
const rnd = () => (seed = (seed * 16807) % 2147483647) / 2147483647;
const gauss = () => rnd() + rnd() + rnd() - 1.5;
const Y = '#fde400', L = '#dde200', G = '#5ac23a', B = '#264f73', T = '#0b6878', M = '#00a088', D = '#008c82';
const clusters = [
  [Y, 550, 1060, 600, 1046, 6, 40], [Y, 600, 1046, 740, 975, 7, 90], [Y, 740, 975, 830, 916, 10, 150],
  [L, 832, 918, 880, 884, 12, 50], [L, 880, 884, 950, 842, 20, 200], [L, 950, 850, 990, 880, 22, 50],
  [L, 1092, 838, 1048, 868, 12, 120], [L, 1048, 868, 990, 905, 16, 130], [L, 1060, 890, 1040, 905, 14, 90],
  [L, 970, 935, 1035, 930, 36, 330], [L, 1003, 945, 1003, 955, 6, 40],
  [L, 956, 930, 850, 972, 14, 80], [L, 925, 975, 890, 985, 7, 50], [Y, 850, 985, 762, 1038, 20, 110],
  [Y, 762, 1038, 600, 1118, 16, 100], [Y, 665, 1088, 640, 1100, 5, 35], [Y, 740, 1050, 720, 1055, 14, 50],
  ['#f0e400', 775, 1065, 795, 1095, 26, 130], [L, 740, 1115, 743, 1125, 5, 22], [Y, 805, 1112, 770, 1130, 10, 50],
  [L, 1040, 960, 1110, 1120, 80, 300], [L, 1110, 960, 1090, 1000, 50, 80], [L, 960, 1120, 1120, 1170, 80, 160],
  [L, 1200, 800, 1150, 900, 36, 130], [L, 1215, 745, 1200, 790, 30, 60], [L, 1205, 743, 1215, 743, 8, 36],
  [L, 1110, 900, 1140, 900, 50, 70], [Y, 600, 1130, 700, 1200, 60, 50], [Y, 680, 1100, 820, 1160, 60, 70],
  [Y, 680, 1215, 696, 1228, 6, 24], [Y, 860, 1202, 920, 1202, 8, 30], [L, 950, 1200, 1010, 1212, 14, 24],
  [L, 1115, 1205, 1125, 1215, 14, 20], [L, 850, 1110, 960, 1130, 50, 36], [L, 1090, 830, 1110, 828, 8, 20],
  [G, 960, 830, 1000, 800, 16, 190], [G, 1004, 780, 1000, 800, 9, 60], [G, 1030, 796, 1075, 775, 9, 80], [G, 985, 838, 970, 840, 16, 60], [G, 1075, 770, 1078, 800, 4, 30],
  [T, 1085, 763, 1115, 742, 12, 150], [T, 1115, 740, 1145, 728, 16, 100], [B, 1130, 735, 1172, 722, 13, 180], [B, 1172, 745, 1200, 728, 12, 15],
  [M, 1140, 715, 1155, 702, 8, 40], [M, 1190, 705, 1220, 678, 16, 110], [M, 1220, 706, 1260, 715, 14, 100], [M, 1245, 722, 1285, 728, 14, 90],
  [D, 1250, 640, 1280, 632, 16, 90], [D, 1262, 655, 1275, 650, 16, 70], [D, 1270, 695, 1290, 708, 14, 110], [D, 1310, 600, 1325, 600, 14, 60],
  [D, 1310, 580, 1330, 580, 8, 24], [D, 1335, 612, 1342, 622, 6, 16], [D, 1285, 622, 1300, 620, 14, 34], [D, 1300, 660, 1310, 675, 14, 40], [D, 1275, 685, 1315, 690, 22, 50],
];
const dots = document.getElementById('dots');
for (const [color, x1, y1, x2, y2, s, n] of clusters) {
  let d = '';
  for (let k = 0; k < n; k++) {
    const t = rnd();
    const x = 2 * Math.round((x1 + (x2 - x1) * t + gauss() * s) / 2);
    const y = 2 * Math.round((y1 + (y2 - y1) * t + gauss() * s) / 2);
    const r = rnd();
    const w = r < .3 ? 4 : 2;
    const t2 = r > .75 ? 4 : 2;
    d += `M${x} ${y}h${w}v${t2}h${-w}z`;
  }
  add(dots, 'path', { d, fill: color, 'shape-rendering': 'crispEdges' });
}

// hospitals
const spots = [[1236, 647], [1222, 672], [1249, 670], [1207, 666], [1247, 669], [1228, 659], [1246, 671], [1236, 683], [1188, 682], [1168, 695], [1167, 705], [1183, 702], [1176, 709], [1177, 690], [1125, 720], [1333, 1215]];
const markers = document.getElementById('markers');
for (const [x, y] of spots) add(markers, 'use', { href: '#marker', x: x - 15, y: y - 15, width: 30, height: 30 });
```
